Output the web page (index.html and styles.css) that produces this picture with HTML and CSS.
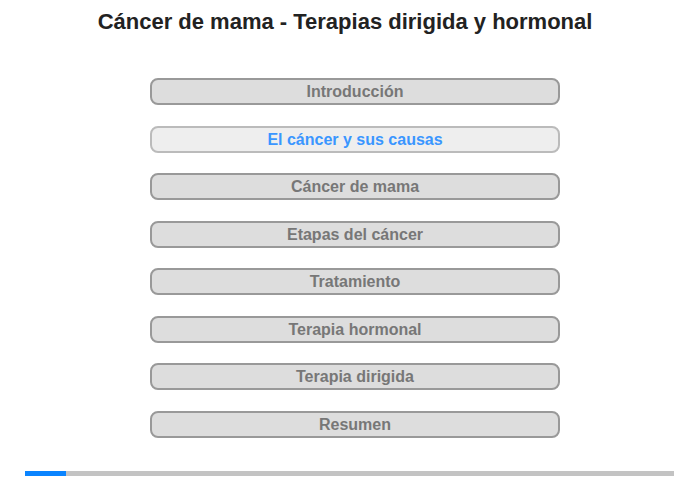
FILE: index.html
```html
<!DOCTYPE html>
<html lang="es">
<head>
  <meta charset="UTF-8" />
  <title>Cáncer de mama - Terapias dirigida y hormonal</title>
  <link rel="stylesheet" href="styles.css">
</head>
<body>

  <h1 class="title">Cáncer de mama - Terapias dirigida y hormonal</h1>

  <!-- chapter menu -->
  <nav class="menu">
    <div class="item">Introducción</div>
    <div class="item active">El cáncer y sus causas</div>
    <div class="item">Cáncer de mama</div>
    <div class="item">Etapas del cáncer</div>
    <div class="item">Tratamiento</div>
    <div class="item">Terapia hormonal</div>
    <div class="item">Terapia dirigida</div>
    <div class="item">Resumen</div>
  </nav>

  <div class="progress">
    <div class="progress-fill" style="width: 41px"></div>
  </div>

</body>
</html>
```

FILE: styles.css
```css
body {
  margin: 0;
  font-family: "Liberation Sans", Arial, sans-serif;
  background: white;
  width: 700px;
}

.title {
  margin: 0;
  padding-top: 9px;
  padding-right: 10px;
  height: 78px;
  box-sizing: border-box;
  text-align: center;
  font-size: 22px;
  line-height: 26px;
  color: #222;
}

.menu {
  display: flex;
  flex-direction: column;
  gap: 20.5px;
  margin-left: 150px;
  width: 410px;
}

.item {
  height: 27px;
  box-sizing: border-box;
  border: 2px solid #999;
  border-radius: 8px;
  background: #ddd;
  color: #777;
  font-weight: bold;
  font-size: 16px;
  line-height: 23px;
  text-align: center;
}

.item.active {
  background: #eee;
  border-color: #bbb;
  color: #3a96ff;
}

.progress {
  margin: 33px 0 0 25px;
  width: 649px;
  height: 5px;
  background: #c3c3c3;
}

.progress-fill {
  height: 100%;
  background: #0a84ff;
}
```
